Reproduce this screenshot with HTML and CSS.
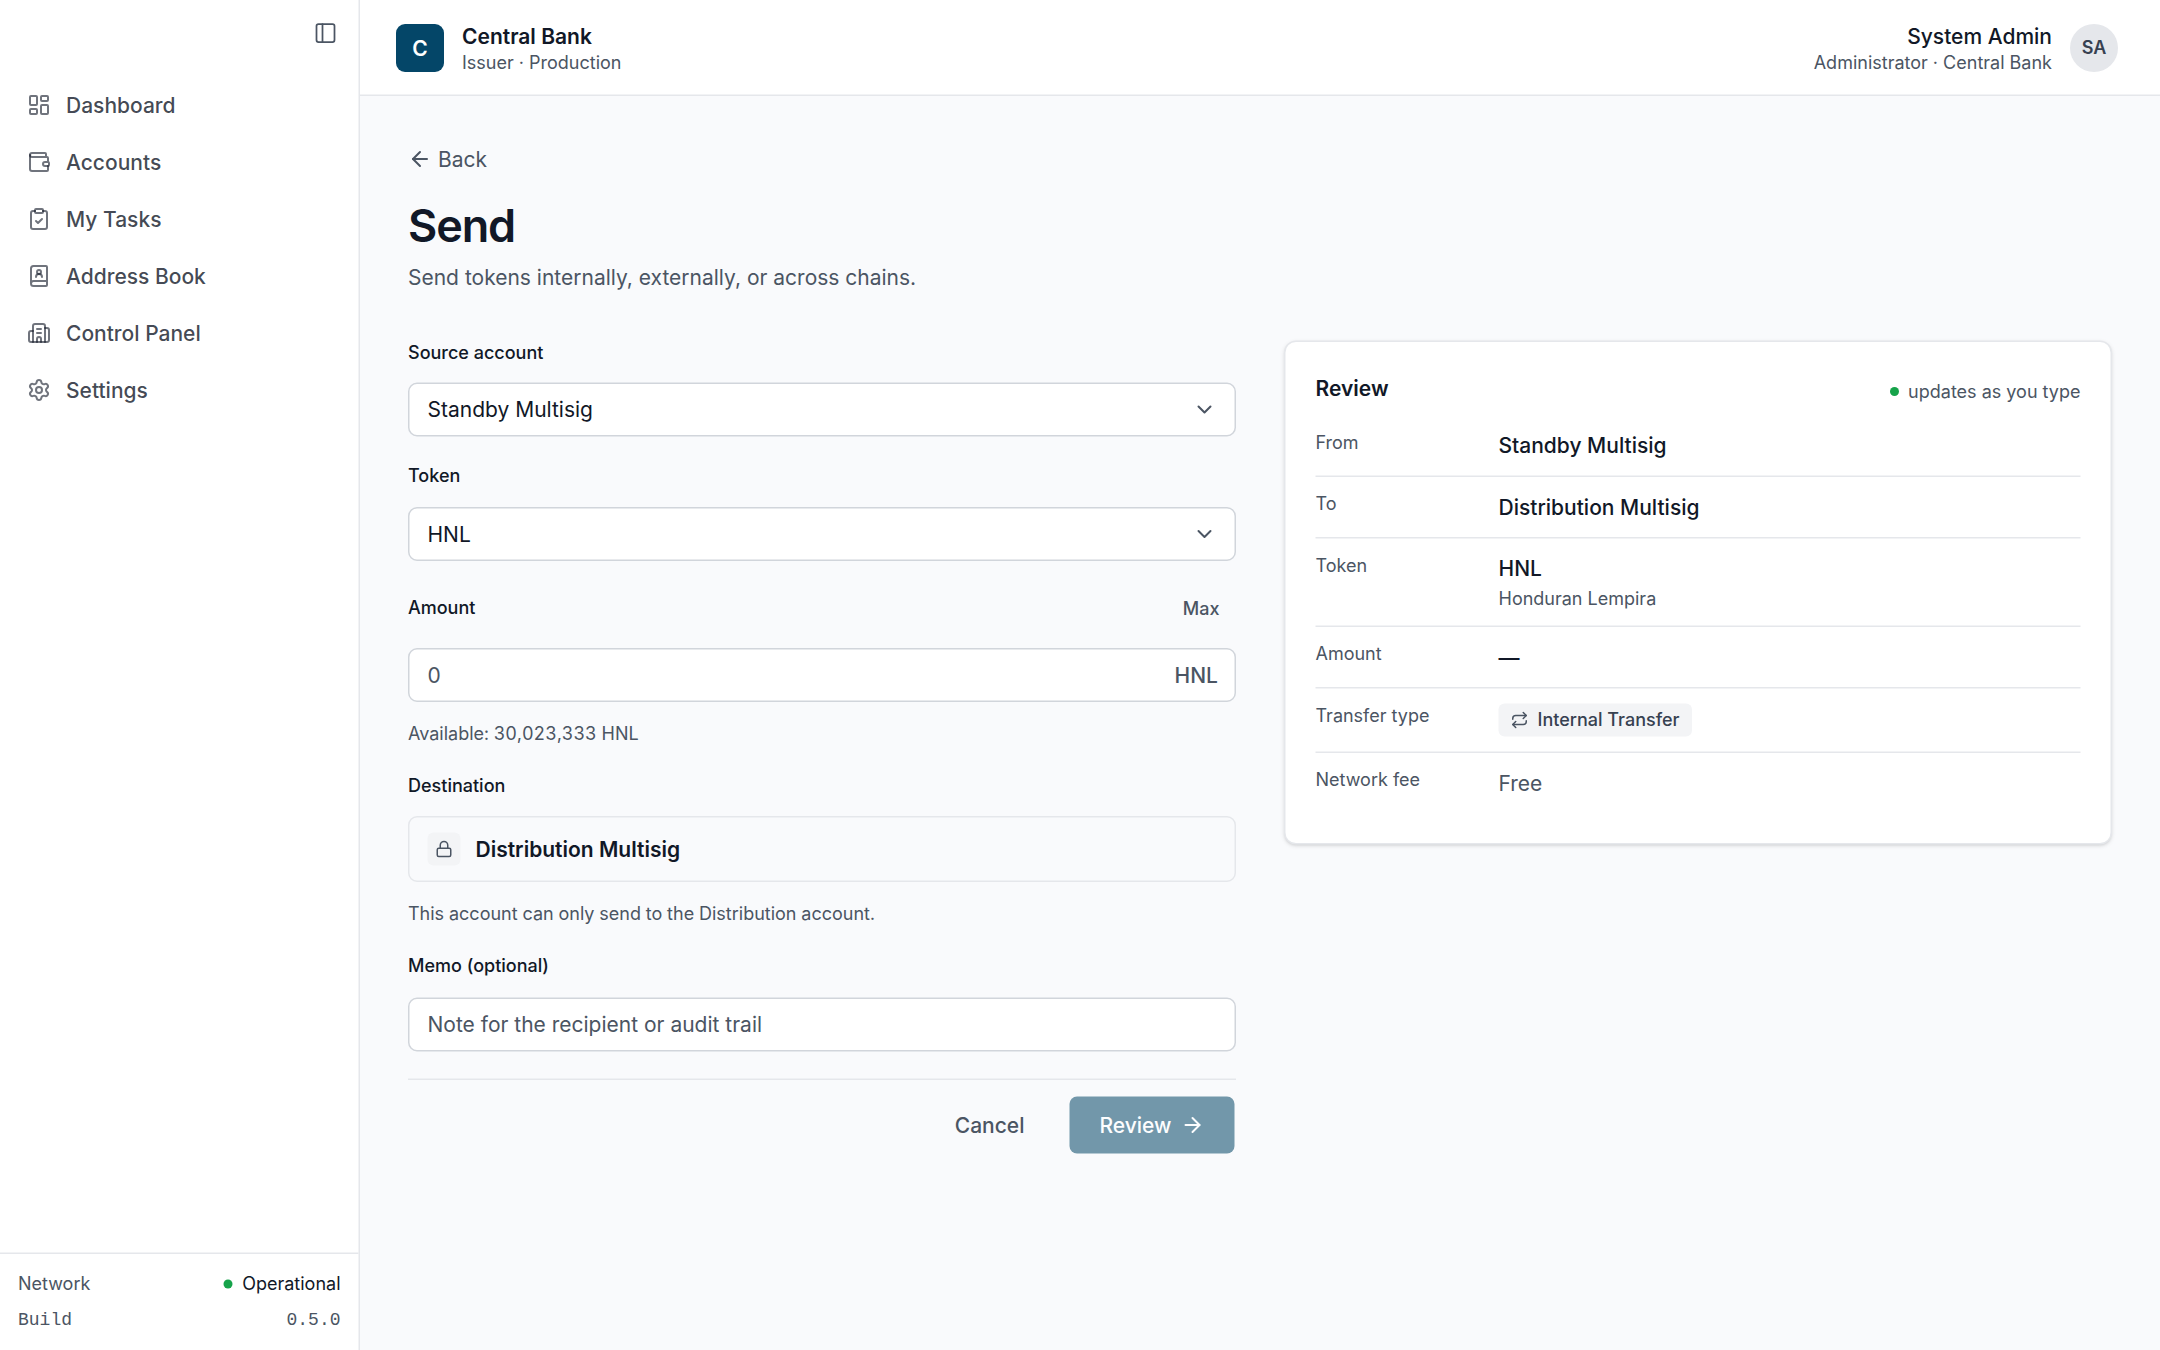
FILE: index.html
```html
<!DOCTYPE html>
<html lang="en">
<head>
    <meta charset="UTF-8">
    <meta name="viewport" content="width=device-width, initial-scale=1.0">
    <title>Send - Central Bank</title>
    <link rel="stylesheet" href="styles.css">
</head>
<body>

    <div class="app">
        <aside class="sidebar">
            <div class="sidebar-top">
                <svg class="icon" viewBox="0 0 24 24"><rect x="3" y="3" width="18" height="18" rx="2"/><path d="M9 3v18"/></svg>
            </div>
            <nav class="nav">
                <a class="nav-item">
                    <svg class="icon" viewBox="0 0 24 24"><rect width="7" height="9" x="3" y="3" rx="1"/><rect width="7" height="5" x="14" y="3" rx="1"/><rect width="7" height="9" x="14" y="12" rx="1"/><rect width="7" height="5" x="3" y="16" rx="1"/></svg>
                    <span>Dashboard</span>
                </a>
                <a class="nav-item">
                    <svg class="icon" viewBox="0 0 24 24"><path d="M19 7V4a1 1 0 0 0-1-1H5a2 2 0 0 0 0 4h15a1 1 0 0 1 1 1v4h-3a2 2 0 0 0 0 4h3a1 1 0 0 0 1-1v-2a1 1 0 0 0-1-1"/><path d="M3 5v14a2 2 0 0 0 2 2h15a1 1 0 0 0 1-1v-4"/></svg>
                    <span>Accounts</span>
                </a>
                <a class="nav-item">
                    <svg class="icon" viewBox="0 0 24 24"><rect width="8" height="4" x="8" y="2" rx="1"/><path d="M16 4h2a2 2 0 0 1 2 2v14a2 2 0 0 1-2 2H6a2 2 0 0 1-2-2V6a2 2 0 0 1 2-2h2"/><path d="m9 14 2 2 4-4"/></svg>
                    <span>My Tasks</span>
                </a>
                <a class="nav-item">
                    <svg class="icon" viewBox="0 0 24 24"><path d="M15 13a3 3 0 1 0-6 0"/><path d="M4 19.5v-15A2.5 2.5 0 0 1 6.5 2H19a1 1 0 0 1 1 1v18a1 1 0 0 1-1 1H6.5a1 1 0 0 1 0-5H20"/><circle cx="12" cy="8" r="2"/></svg>
                    <span>Address Book</span>
                </a>
                <a class="nav-item">
                    <svg class="icon" viewBox="0 0 24 24"><path d="M10 12h4"/><path d="M10 8h4"/><path d="M14 21v-3a2 2 0 0 0-4 0v3"/><path d="M6 10H4a2 2 0 0 0-2 2v7a2 2 0 0 0 2 2h16a2 2 0 0 0 2-2V9a2 2 0 0 0-2-2h-2"/><path d="M6 21V5a2 2 0 0 1 2-2h8a2 2 0 0 1 2 2v16"/></svg>
                    <span>Control Panel</span>
                </a>
                <a class="nav-item">
                    <svg class="icon" viewBox="0 0 24 24"><path d="M9.671 4.136a2.34 2.34 0 0 1 4.659 0 2.34 2.34 0 0 0 3.319 1.915 2.34 2.34 0 0 1 2.33 4.033 2.34 2.34 0 0 0 0 3.831 2.34 2.34 0 0 1-2.33 4.033 2.34 2.34 0 0 0-3.319 1.915 2.34 2.34 0 0 1-4.659 0 2.34 2.34 0 0 0-3.32-1.915 2.34 2.34 0 0 1-2.33-4.033 2.34 2.34 0 0 0 0-3.831A2.34 2.34 0 0 1 6.35 6.051a2.34 2.34 0 0 0 3.319-1.915"/><circle cx="12" cy="12" r="3"/></svg>
                    <span>Settings</span>
                </a>
            </nav>
            <div class="sidebar-footer">
                <div class="status-row">
                    <span>Network</span>
                    <span class="status"><i class="dot"></i>Operational</span>
                </div>
                <div class="status-row mono">
                    <span>Build</span>
                    <span>0.5.0</span>
                </div>
            </div>
        </aside>

        <div class="main">
            <header class="topbar">
                <div class="org">
                    <div class="org-logo">C</div>
                    <div>
                        <div class="org-name">Central Bank</div>
                        <div class="sub">Issuer · Production</div>
                    </div>
                </div>
                <div class="user">
                    <div class="user-text">
                        <div class="user-name">System Admin</div>
                        <div class="sub">Administrator · Central Bank</div>
                    </div>
                    <div class="avatar">SA</div>
                </div>
            </header>

            <main class="content">
                <a class="back">
                    <svg class="icon" viewBox="0 0 24 24"><path d="m12 19-7-7 7-7"/><path d="M19 12H5"/></svg>
                    Back
                </a>
                <h1>Send</h1>
                <p class="lead">Send tokens internally, externally, or across chains.</p>

                <div class="columns">
                    <form class="form">
                        <div class="field">
                            <div class="label">Source account</div>
                            <div class="control">
                                <span>Standby Multisig</span>
                                <svg class="icon" viewBox="0 0 24 24"><path d="m6 9 6 6 6-6"/></svg>
                            </div>
                        </div>

                        <div class="field">
                            <div class="label">Token</div>
                            <div class="control">
                                <span>HNL</span>
                                <svg class="icon" viewBox="0 0 24 24"><path d="m6 9 6 6 6-6"/></svg>
                            </div>
                        </div>

                        <div class="field">
                            <div class="label-row">
                                <div class="label">Amount</div>
                                <span class="max">Max</span>
                            </div>
                            <div class="control control-amount">
                                <input type="text" placeholder="0">
                                <span class="suffix">HNL</span>
                            </div>
                            <div class="hint">Available: 30,023,333 HNL</div>
                        </div>

                        <div class="field">
                            <div class="label">Destination</div>
                            <div class="locked">
                                <span class="lock"><svg class="icon" viewBox="0 0 24 24"><rect width="18" height="11" x="3" y="11" rx="2"/><path d="M7 11V7a5 5 0 0 1 10 0v4"/></svg></span>
                                <span>Distribution Multisig</span>
                            </div>
                            <div class="hint">This account can only send to the Distribution account.</div>
                        </div>

                        <div class="field">
                            <div class="label">Memo (optional)</div>
                            <div class="control">
                                <input type="text" placeholder="Note for the recipient or audit trail">
                            </div>
                        </div>

                        <div class="actions">
                            <button type="button" class="btn btn-ghost">Cancel</button>
                            <button type="button" class="btn btn-primary">
                                Review
                                <svg class="icon" viewBox="0 0 24 24"><path d="M5 12h14"/><path d="m12 5 7 7-7 7"/></svg>
                            </button>
                        </div>
                    </form>

                    <section class="card">
                        <div class="card-head">
                            <h2>Review</h2>
                            <span class="live"><i class="dot"></i>updates as you type</span>
                        </div>
                        <dl class="summary">
                            <div class="row"><dt>From</dt><dd>Standby Multisig</dd></div>
                            <div class="row"><dt>To</dt><dd>Distribution Multisig</dd></div>
                            <div class="row">
                                <dt>Token</dt>
                                <dd>HNL<div class="note">Honduran Lempira</div></dd>
                            </div>
                            <div class="row"><dt>Amount</dt><dd>—</dd></div>
                            <div class="row">
                                <dt>Transfer type</dt>
                                <dd>
                                    <span class="chip"><svg class="icon" viewBox="0 0 24 24"><path d="m17 2 4 4-4 4"/><path d="M3 11v-1a4 4 0 0 1 4-4h14"/><path d="m7 22-4-4 4-4"/><path d="M21 13v1a4 4 0 0 1-4 4H3"/></svg>Internal Transfer</span>
                                </dd>
                            </div>
                            <div class="row"><dt>Network fee</dt><dd class="free">Free</dd></div>
                        </dl>
                    </section>
                </div>
            </main>
        </div>
    </div>

</body>
</html>
```
FILE: styles.css
```css
* {
    box-sizing: border-box;
}

body {
    margin: 0;
    height: 100vh;
    background-color: #ffffff;
    font-family: Inter, "Liberation Sans", sans-serif;
    font-size: 14px;
    line-height: 20px;
    color: #111827;
}

/* 1440x900 layout, enlarged one and a half times */
.app {
    display: flex;
    width: 1440px;
    height: 900px;
    transform: scale(1.5);
    transform-origin: 0 0;
}

.icon {
    display: block;
    flex: none;
    width: 16px;
    height: 16px;
    fill: none;
    stroke: currentColor;
    stroke-width: 2;
    stroke-linecap: round;
    stroke-linejoin: round;
}

.dot {
    width: 6px;
    height: 6px;
    border-radius: 50%;
    background-color: #16a34a;
}

/* sidebar */
.sidebar {
    display: flex;
    flex-direction: column;
    flex: none;
    width: 240px;
    border-right: 1px solid #e5e7eb;
    background-color: #ffffff;
}

.sidebar-top {
    display: flex;
    justify-content: flex-end;
    height: 52px;
    padding: 14px 14px 0;
    color: #4b5563;
}

.sidebar-top .icon {
    stroke-width: 1.75;
}

.nav {
    display: flex;
    flex-direction: column;
    flex: 1;
    gap: 2px;
    padding: 0 8px;
}

.nav-item {
    display: flex;
    align-items: center;
    gap: 10px;
    height: 36px;
    padding: 0 10px;
    font-weight: 500;
    color: rgba(17, 24, 39, 0.8);
}

.nav-item .icon {
    color: rgba(17, 24, 39, 0.6);
}

.sidebar-footer {
    display: flex;
    flex-direction: column;
    gap: 8px;
    padding: 12px;
    border-top: 1px solid #e5e7eb;
    font-size: 12px;
    line-height: 16px;
    color: #4b5563;
}

.status-row {
    display: flex;
    justify-content: space-between;
}

.status {
    display: flex;
    align-items: center;
    gap: 6px;
    color: #111827;
}

.mono {
    font-family: "Liberation Mono", monospace;
}

/* top bar */
.main {
    display: flex;
    flex-direction: column;
    flex: 1;
    background-color: #f9fafc;
}

.topbar {
    display: flex;
    align-items: center;
    justify-content: space-between;
    height: 64px;
    padding: 1px 28px 0 24px;
    border-bottom: 1px solid #e5e7eb;
    background-color: #ffffff;
}

.org,
.user {
    display: flex;
    align-items: center;
    gap: 12px;
}

.org-logo {
    width: 32px;
    height: 32px;
    border-radius: 6px;
    background-color: #044668;
    color: #ffffff;
    font-weight: 600;
    line-height: 32px;
    text-align: center;
}

.org-name {
    font-weight: 600;
}

.sub {
    font-size: 12px;
    line-height: 16px;
    color: #4b5563;
}

.user-text {
    text-align: right;
}

.user-name {
    font-weight: 500;
}

.avatar {
    width: 32px;
    height: 32px;
    border-radius: 50%;
    background-color: #e5e7eb;
    color: #374151;
    font-size: 12px;
    font-weight: 600;
    line-height: 32px;
    text-align: center;
}

/* page */
.content {
    padding: 32px;
}

.back {
    display: flex;
    align-items: center;
    gap: 4px;
    color: #4b5563;
}

h1 {
    margin: 16px 0 7px;
    font-size: 30px;
    font-weight: 600;
    line-height: 36px;
    letter-spacing: -0.025em;
}

.lead {
    margin: 0 0 32px;
    color: #4b5563;
}

.columns {
    display: grid;
    grid-template-columns: 1fr 1fr;
    gap: 32px;
    align-items: start;
}

/* form */
.form {
    display: flex;
    flex-direction: column;
    gap: 18px;
}

.field {
    display: flex;
    flex-direction: column;
    gap: 12.4px;
}

.label {
    font-size: 12px;
    font-weight: 500;
    line-height: 16px;
}

.label-row {
    display: flex;
    align-items: center;
    justify-content: space-between;
    height: 28px;
}

.label-row .label {
    padding-bottom: 1px;
}

.max {
    padding: 0 11px;
    font-size: 12px;
    font-weight: 500;
    line-height: 16px;
    color: #4b5563;
}

.control {
    display: flex;
    align-items: center;
    justify-content: space-between;
    height: 36px;
    padding: 0 12px;
    border: 1px solid #d1d5db;
    border-radius: 6px;
    background-color: #ffffff;
}

.control-amount {
    padding-right: 11px;
}

.control .icon {
    color: #4b5563;
}

.control input {
    flex: 1;
    padding: 0;
    border: 0;
    outline: 0;
    background: none;
    font: inherit;
}

.control input::placeholder {
    color: #4b5563;
}

.suffix {
    font-weight: 500;
    color: #4b5563;
}

.hint {
    margin: -0.6px 0 0.6px;
    font-size: 12px;
    line-height: 17.4px;
    font-variant-numeric: tabular-nums;
    color: #4b5563;
}

.locked {
    display: flex;
    align-items: center;
    gap: 10px;
    height: 44px;
    padding: 0 12px;
    border: 1px solid #e5e7eb;
    border-radius: 6px;
    font-weight: 600;
}

.lock {
    display: flex;
    align-items: center;
    justify-content: center;
    width: 22px;
    height: 22px;
    border-radius: 4px;
    background-color: #f3f4f6;
    color: #4b5563;
}

.lock .icon {
    width: 12px;
    height: 12px;
}

.actions {
    display: flex;
    justify-content: flex-end;
    gap: 8px;
    padding-top: 10px;
    border-top: 1px solid #e5e7eb;
}

.btn {
    display: flex;
    align-items: center;
    gap: 6px;
    height: 40px;
    padding: 0 20px;
    border: 1px solid transparent;
    border-radius: 6px;
    background-clip: padding-box;
    font: inherit;
    font-weight: 500;
}

.btn-ghost {
    background-color: transparent;
    color: #4b5563;
}

.btn-primary {
    background-color: #7297aa;
    color: #fcfdfe;
}

/* review card */
.card {
    padding: 20px;
    border: 1px solid #e5e7eb;
    border-radius: 8px;
    background-color: #ffffff;
    box-shadow: 0 1px 3px rgba(0, 0, 0, 0.1), 0 1px 2px -1px rgba(0, 0, 0, 0.1);
}

.card-head {
    display: flex;
    align-items: flex-end;
    justify-content: space-between;
    margin-bottom: 7px;
}

h2 {
    margin: 0;
    font-size: 14px;
    font-weight: 600;
    line-height: 22px;
}

.live {
    display: flex;
    align-items: center;
    gap: 6px;
    font-size: 12px;
    line-height: 18px;
    color: #4b5563;
}

.summary {
    margin: 0;
}

.row {
    display: grid;
    grid-template-columns: 110px 1fr;
    gap: 12px;
    padding: 10px 0;
    border-bottom: 1px solid #e5e7eb;
}

.row:last-child {
    border-bottom: 0;
}

dt {
    font-size: 12px;
    line-height: 16px;
    color: #4b5563;
}

dd {
    margin: 0;
    font-weight: 500;
}

.note {
    margin-top: 2px;
    font-size: 12px;
    font-weight: 400;
    line-height: 16px;
    color: #4b5563;
}

.chip {
    display: flex;
    align-items: center;
    gap: 6px;
    width: fit-content;
    height: 22px;
    padding: 0 8px;
    border-radius: 4px;
    background-color: #f3f4f6;
    color: #374151;
    font-size: 12px;
    font-weight: 500;
}

.chip .icon {
    width: 12px;
    height: 12px;
    color: #4b5563;
}

.free {
    font-weight: 400;
    color: #4b5563;
}
```
